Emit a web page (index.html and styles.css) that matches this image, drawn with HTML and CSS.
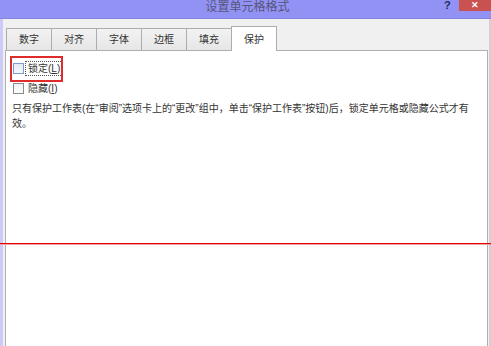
FILE: index.html
```html
<!DOCTYPE html>
<html lang="zh-CN">
<head>
<meta charset="UTF-8" />
<title>设置单元格格式</title>
<link rel="stylesheet" href="styles.css">
</head>
<body>

<div class="dialog">
  <div class="titlebar">
    <div class="title">设置单元格格式</div>
    <span class="help-btn">?</span>
    <span class="close-btn">&#x2715;</span>
  </div>

  <div class="frame">
    <div class="tabs">
      <div class="tab">数字</div>
      <div class="tab">对齐</div>
      <div class="tab">字体</div>
      <div class="tab">边框</div>
      <div class="tab">填充</div>
      <div class="tab active">保护</div>
    </div>

    <div class="panel">
      <label class="check-row">
        <span class="checkbox hot"></span>
        <span class="label focus">锁定(<u>L</u>)</span>
      </label>
      <label class="check-row">
        <span class="checkbox"></span>
        <span class="label">隐藏(<u>I</u>)</span>
      </label>
      <p class="note">只有保护工作表(在“审阅”选项卡上的“更改”组中，单击“保护工作表”按钮)后，锁定单元格或隐藏公式才有效。</p>
    </div>
  </div>

  <div class="mark-box"></div>
  <div class="mark-line"></div>
</div>

</body>
</html>
```

FILE: styles.css
```css
* { box-sizing: border-box; margin: 0; padding: 0; }
body {
  width: 491px; height: 346px; overflow: hidden;
  background: #f0f0f0;
  font-family: "Liberation Sans", "Noto Sans CJK SC", sans-serif;
  color: #333;
}
.dialog {
  position: relative;
  height: 346px;
  display: flex;
  flex-direction: column;
}

.titlebar {
  position: relative;
  height: 19px;
  background: #9292f5;
  border-bottom: 1px solid #8585e0;
  display: flex;
  justify-content: center;
  align-items: flex-start;
}
.title {
  font-size: 12px;
  line-height: 15px;
  color: #55557a;
  padding-left: 4px;
}
.help-btn {
  position: absolute;
  left: 444px; top: -1px;
  font-size: 11px;
  font-weight: 700;
  color: #1e2c5c;
}
.close-btn {
  position: absolute;
  left: 459px; top: 0;
  width: 32px; height: 11px;
  background: #c9514f;
  color: #fff;
  font-size: 9px;
  font-weight: 700;
  line-height: 11px;
  text-align: center;
}

.frame {
  flex: 1;
  display: flex;
  flex-direction: column;
  border-left: 3px solid #cbcbf6;
  border-right: 2px solid #d2d2d2;
}
.tabs {
  display: flex;
  align-items: flex-end;
  height: 31px;
  padding-left: 3px;
}
.tab {
  height: 22px;
  padding: 0 12px;
  font-size: 10px;
  line-height: 21px;
  color: #333;
  background: linear-gradient(#f2f2f2, #e6e6e6);
  border: 1px solid #acacac;
  border-bottom: none;
  margin-right: -1px;
}
.tab.active {
  position: relative;
  height: 25px;
  line-height: 25px;
  padding: 0 12px;
  margin-bottom: -1px;
  background: #fff;
  z-index: 1;
}

.panel {
  flex: 1;
  margin: 0 1px 0 2px;
  background: #fff;
  border: 1px solid #b0b0b0;
  border-bottom: none;
  padding: 7px 4px 0 6px;
}
.check-row {
  display: flex;
  align-items: center;
  height: 20px;
  padding-left: 1px;
  font-size: 10px;
}
.checkbox {
  width: 11px; height: 11px;
  border: 1px solid #8b8b8b;
  background: linear-gradient(#eef0f3, #fbfbfb);
  margin-right: 1px;
}
.checkbox.hot {
  border-color: #7b9ccc;
  background: linear-gradient(#e3ecf8, #f4f8fd);
}
.label {
  padding: 0 2px;
  line-height: 13px;
  border: 1px solid transparent;
}
.label.focus {
  border: 1px dotted #555;
}
.label u { text-decoration: underline; }

.note {
  margin-top: 3px;
  max-width: 462px;
  font-size: 10px;
  line-height: 15px;
  color: #333;
}

.mark-box {
  position: absolute;
  left: 10px; top: 56px;
  width: 53px; height: 26px;
  border: 2px solid #e02b2b;
}
.mark-line {
  position: absolute;
  left: 0; top: 243px;
  width: 100%; height: 2px;
  background: #e00000;
  border-bottom: 1px solid #f2a0a0;
}
```
